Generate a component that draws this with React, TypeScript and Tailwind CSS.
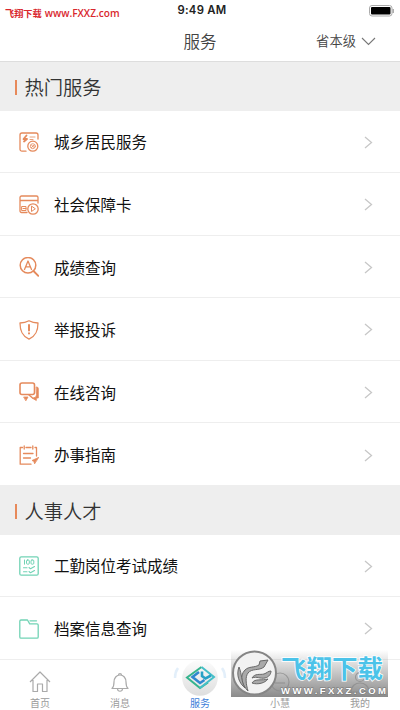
import { ReactNode } from 'react';

const orange = 'h-5 w-5 shrink-0 text-[#e58a5c]';
const green = 'h-5 w-5 shrink-0 text-[#72d3b5]';

interface IconProps {
  className: string;
  children: ReactNode;
}

function Icon({ className, children }: IconProps) {
  return (
    <svg viewBox="0 0 20 20" className={className} fill="none" stroke="currentColor" strokeWidth="1.3" strokeLinecap="round" strokeLinejoin="round">
      {children}
    </svg>
  );
}

const hotServices = [
  {
    label: '城乡居民服务',
    icon: (
      <Icon className={orange}>
        <path d="M7 19.200H3a2 2 0 0 1-2-2V3a2 2 0 0 1 2-2h14a2 2 0 0 1 2 2v4" />
        <path d="M7.500 3.500 4.500 7H8L5 9.500" strokeWidth="1.800" />
        <path d="M11 5h5M11 7.500h3" strokeWidth=".8" />
        <circle cx="13.800" cy="14.200" r="5" />
        <circle cx="13.800" cy="14.200" r="2.500" strokeWidth=".8" />
        <path d="m12.500 13 2.600 2.600m0-2.600-2.600 2.600" strokeWidth=".9" />
      </Icon>
    ),
  },
  {
    label: '社会保障卡',
    icon: (
      <Icon className={orange}>
        <path d="M8 17.500H2.500A1.500 1.500 0 0 1 1 16V2.500A1.500 1.500 0 0 1 2.500 1h15A1.500 1.500 0 0 1 19 2.500V8M1 5.500h18" />
        <path d="M3 11.500h4v4H3zM4 13.500h3" strokeWidth="1" />
        <circle cx="14" cy="14" r="5.200" />
        <path d="M12.500 11.500v5l3.500-2.500z" strokeWidth="1" />
      </Icon>
    ),
  },
  {
    label: '成绩查询',
    icon: (
      <Icon className={orange}>
        <circle cx="9" cy="8.300" r="7.800" strokeWidth="1.500" />
        <path d="m14.500 14 4.800 4.800" strokeWidth="1.900" />
        <path d="M5.500 12.500 9 4l3.500 8.500M7 9.800h4" />
      </Icon>
    ),
  },
  {
    label: '举报投诉',
    icon: (
      <Icon className={orange}>
        <path d="M10 .8C7.500 2.200 4 3 1 3c0 8 2 13 9 16.200C17 16 19 11 19 3c-3 0-6.500-.8-9-2.200Z" />
        <path d="M10 5v5.500m0 2.800v.2" strokeWidth="2" />
      </Icon>
    ),
  },
  {
    label: '在线咨询',
    icon: (
      <Icon className={orange}>
        <path d="M3 1h10.500a2 2 0 0 1 2 2v7.500a2 2 0 0 1-2 2H3a2 2 0 0 1-2-2V3a2 2 0 0 1 2-2Z" strokeWidth="1.600" />
        <path d="M5 15h4l-2 3.500ZM17.500 5c1 0 1.800.5 1.800 1.500v9.500h-2v2.500L13 16c3 0 4.500-1 4.500-3Z" fill="currentColor" strokeWidth=".8" />
        <path d="m10 13 3 2.500" strokeWidth="1.500" />
      </Icon>
    ),
  },
  {
    label: '办事指南',
    icon: (
      <Icon className={orange}>
        <path d="M3.500 2.500H1.200v16.700H12M7 2.500h5M16 2.500h1.500v8.500" />
        <path d="M5.200 1v3M13.800 1v3M4.500 8.500h9.500M4.500 13h7" />
        <path d="m19.500 12.500-6.500 3 1.800.8.7 2.200Z" fill="currentColor" strokeWidth=".8" />
      </Icon>
    ),
  },
];

const talentServices = [
  {
    label: '工勤岗位考试成绩',
    icon: (
      <Icon className={green}>
        <rect x=".8" y=".8" width="18.400" height="18.400" rx="1.500" />
        <path d="M5.500 4v4.200" strokeWidth="1" />
        <rect x="7.500" y="4" width="2.800" height="4.200" rx="1" strokeWidth="1" />
        <rect x="12" y="4" width="2.800" height="4.200" rx="1" strokeWidth="1" />
        <path d="M4.500 11.800H8M4.500 15.800H8M10 11.500l1.500 1.300 4-2.300M10 15.500l1.500 1.300 4-2.300" strokeWidth="1.100" />
      </Icon>
    ),
  },
  {
    label: '档案信息查询',
    icon: (
      <Icon className={green}>
        <path d="M2 1h6.500l2.200 3.800H18A1.200 1.200 0 0 1 19.200 6v12a1.200 1.200 0 0 1-1.200 1.200H2A1.200 1.200 0 0 1 .8 18V2.200A1.200 1.200 0 0 1 2 1Z" />
        <path d="M11 1.800h6.500" />
      </Icon>
    ),
  },
];

interface Service {
  label: string;
  icon: ReactNode;
}

function Section({ title, items }: { title: string; items: Service[] }) {
  return (
    <section>
      <h2 className="flex h-[48.500px] items-center bg-[#eeeeee] pl-[15px] pt-[2px] text-[19.300px] font-[350] text-[#333]">
        <span className="mr-[7.500px] h-[15px] w-[2px] bg-[#e7895a]" />
        {title}
      </h2>
      <ul>
        {items.map((item) => (
          <li key={item.label} className="flex h-[62.600px] items-center border-b border-[#eeeeee] pl-[19px] pr-[27px] pt-[1.500px]">
            {item.icon}
            <span className="ml-[15px] flex-1 text-[15.500px] text-[#111]">{item.label}</span>
            <svg viewBox="0 0 9 13" className="h-[13px] w-[9px]" fill="none" stroke="#c7c7c7" strokeWidth="1.300">
              <path d="m1 1 6.500 5.500L1 12" />
            </svg>
          </li>
        ))}
      </ul>
    </section>
  );
}

function TabBar() {
  return (
    <nav className="grid h-[51px] grid-cols-5 text-[10px] leading-[12px] text-[#9b9b9b]">
      <div className="flex flex-col items-center pt-[11px]">
        <svg viewBox="0 0 22 22" className="h-[22px] w-[22px]" fill="none" stroke="#aaa" strokeWidth="1.200" strokeLinejoin="round">
          <path d="M1 11 11 1l10 10M4 9v11.500h4.500V13h5v7.500H18V9" />
        </svg>
        <span className="mt-[4px]">首页</span>
      </div>
      <div className="flex flex-col items-center pt-[12px]">
        <svg viewBox="0 0 20 21" className="h-[21px] w-5" fill="none" stroke="#aaa" strokeWidth="1.200" strokeLinejoin="round" strokeLinecap="round">
          <path d="M2 16.500c2-1.800 2-3.500 2-6.500 0-4 2.500-7 6-7s6 3 6 7c0 3 0 4.700 2 6.500ZM8.500 3c0-2 3-2 3 0M7.500 17c.3 3 4.700 3 5 0" />
        </svg>
        <span className="mt-[4px]">消息</span>
      </div>
      <div className="flex flex-col items-center text-[#3c7ed9]">
        <svg viewBox="0 0 56 40" className="h-[40px] w-[56px]">
          <defs>
            <linearGradient id="disc" x2="0" y2="1">
              <stop stopColor="#fcfcfc" />
              <stop offset="1" stopColor="#dedede" />
            </linearGradient>
          </defs>
          <path d="M6 8Q3 12 3 18M50 8q3 4 3 10" fill="none" stroke="#e3effa" strokeWidth="2.500" />
          <circle cx="28" cy="18" r="17.800" fill="url(#disc)" />
          <g fill="none">
            <path d="m29.500 7-14.500 10.500L28 28l8-5.500" stroke="#35b48d" strokeWidth="2" />
            <path d="m29.500 7 12.500 10L28 28" stroke="#45bfc8" strokeWidth="2" />
            <path d="m27 12-6.500 5 7.500 6 4.500-3" stroke="#2f87cf" strokeWidth="2.600" />
            <path d="M30 11.500V16l3.500 2.500L39 15.500" stroke="#27a0c6" strokeWidth="2.600" />
          </g>
        </svg>
        <span className="-mt-[3px]">服务</span>
      </div>
      <div className="flex flex-col items-center pt-[11px]">
        <svg viewBox="0 0 22 22" className="h-[22px] w-[22px]" fill="none" stroke="#aaa" strokeWidth="1.200">
          <circle cx="11" cy="11" r="9" />
          <path d="M6 12h10" />
        </svg>
        <span className="mt-[4px]">小慧</span>
      </div>
      <div className="flex flex-col items-center pt-[11px]">
        <svg viewBox="0 0 22 22" className="h-[22px] w-[22px]" fill="none" stroke="#aaa" strokeWidth="1.200">
          <circle cx="11" cy="6" r="4.500" />
          <path d="M2 21c0-12 18-12 18 0Z" />
        </svg>
        <span className="mt-[4px]">我的</span>
      </div>
    </nav>
  );
}

function Watermark() {
  return (
    <div className="absolute left-[231px] top-[650px] flex h-[47px] w-[157px] items-center bg-gradient-to-b from-transparent to-[#8a8a8a]">
      <svg viewBox="0 0 47 47" className="h-[47px] w-[47px] shrink-0">
        <circle cx="23.500" cy="23" r="21.500" fill="#f2f2f2" stroke="#858585" strokeWidth="2" />
        <g fill="#a9a9a9" stroke="#686868" strokeWidth="1" strokeLinejoin="round">
          <path d="M17 41c-2-7-3-14 0-18 4-5 11-2 16-6l4-7-8 1-1 4c-5 3-10 1-14 5-6 6-3 15 3 21Z" />
          <path d="M8 17c3 7 2 14 6 21-6-5-9-13-6-21Z" />
          <path d="M21 28c3-5 8-3 12-4 3-1 4-3 7-3 0 3-2 6-6 7-5 1-8-2-13 0Z" />
          <path d="M21 33c3-5 10-2 16-4-3 4-10 6-16 4Z" />
        </g>
      </svg>
      <svg viewBox="0 0 110 47" className="h-[47px] w-[110px]">
        <text x="3" y="28" textLength="102" lengthAdjust="spacingAndGlyphs" className="fill-[#4cc3e9] stroke-white stroke-[1.500px] text-[24.500px] font-bold [paint-order:stroke]">飞翔下载</text>
        <text x="3" y="44" textLength="105" lengthAdjust="spacing" className="fill-white stroke-[#777] stroke-[1px] font-['Liberation_Sans'] text-[9.500px] font-bold [paint-order:stroke]">WWW.FXXZ.COM</text>
      </svg>
    </div>
  );
}

export default function App() {
  return (
    <div className="relative h-[710px] w-[400px] overflow-hidden bg-white font-['Noto_Sans_CJK_SC',sans-serif]">
      <header className="h-[62px] border-b border-[#dddddd]">
        <div className="grid h-[21px] grid-cols-[1fr_auto_1fr] items-center">
          <div className="flex items-center gap-[3px] pl-[5px] pt-[6px] text-[#d9272e]">
            <span className="text-[9.200px] font-bold">飞翔下载</span>
            <span className="font-['Open_Sans'] text-[10.100px] font-semibold">www.FXXZ.com</span>
          </div>
          <span className="pl-[4px] font-['Inter'] text-[11.300px] font-semibold tracking-[0.300px] text-[#222]">9:49 AM</span>
          <svg viewBox="0 0 26 12" className="mr-[5px] h-[12px] w-[26px] justify-self-end">
            <rect x=".5" y=".5" width="22.500" height="10.500" rx="2.500" fill="white" stroke="#aaa" />
            <rect x="2" y="2" width="19.500" height="7.500" rx="1" fill="black" />
            <path d="M24.200 4v4" stroke="#999" strokeWidth="1.200" />
          </svg>
        </div>
        <div className="grid h-[40px] grid-cols-[1fr_auto_1fr] items-center text-[#444]">
          <h1 className="col-start-2 text-[16.500px] font-[350]">服务</h1>
          <div className="flex items-center justify-end gap-[5px] pr-[24px] text-[13.300px] font-[350]">
            省本级
            <svg viewBox="0 0 15 9" className="h-[9px] w-[15px]" fill="none" stroke="#777" strokeWidth="1.100">
              <path d="m1 1 6.500 6.500L14 1" />
            </svg>
          </div>
        </div>
      </header>
      <Section title="热门服务" items={hotServices} />
      <Section title="人事人才" items={talentServices} />
      <TabBar />
      <Watermark />
    </div>
  );
}
